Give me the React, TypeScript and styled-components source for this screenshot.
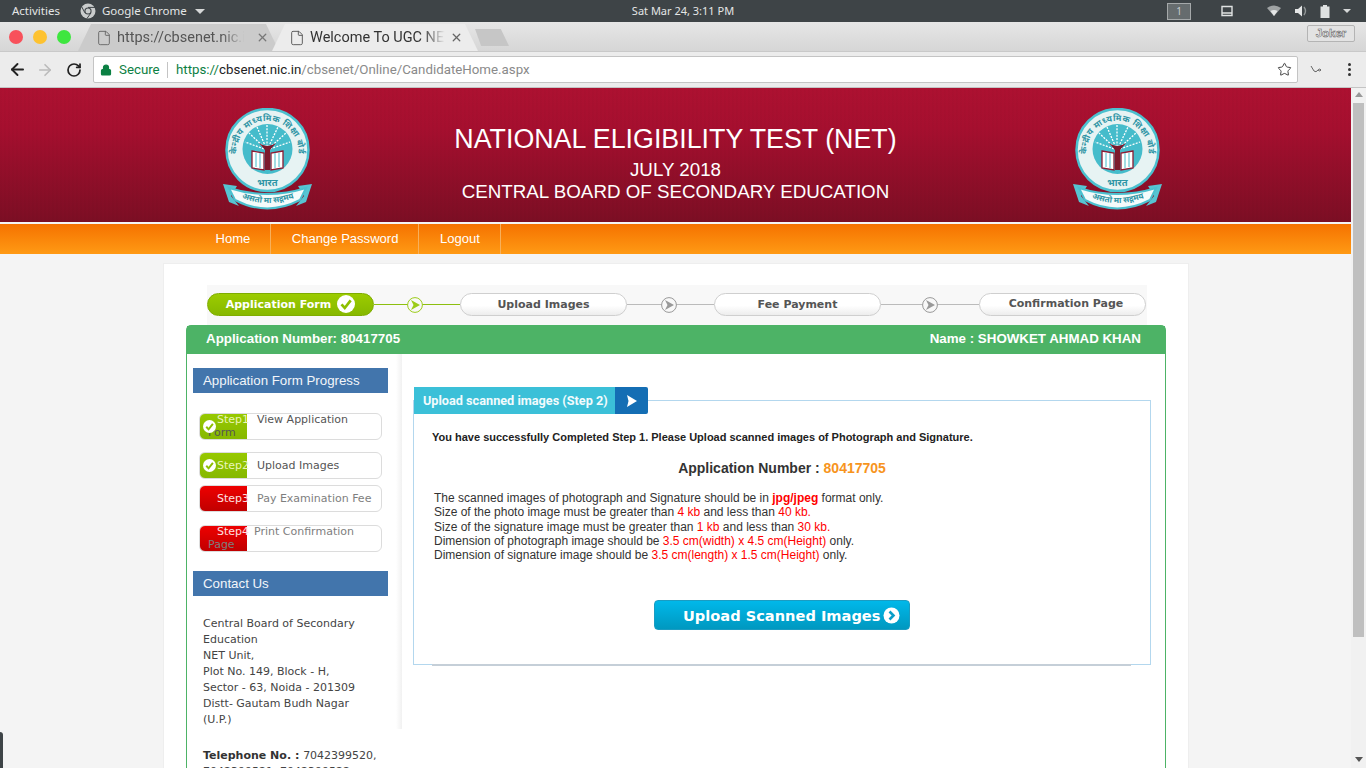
import React from 'react'
import styled, { createGlobalStyle } from 'styled-components'
import { ArrowLeft, ArrowRight, RotateCw, Star, Lock, File, X } from 'lucide-react'

const GlobalStyle = createGlobalStyle`
  html, body {
    margin: 0;
    padding: 0;
    overflow: hidden;
    background: #f4f4f4;
  }
  * { box-sizing: border-box; }
`

const Screen = styled.div`
  width: 1366px;
  height: 768px;
  overflow: hidden;
  display: flex;
  flex-direction: column;
  position: relative;
`

/* desktop top bar */
const TopBar = styled.div`
  height: 22px;
  flex: none;
  background: #3e4447;
  color: #e4e6e6;
  font: 11.5px/22px "Noto Sans", sans-serif;
  display: grid;
  grid-template-columns: 1fr auto 1fr;
  align-items: center;
`

const TopLeft = styled.div`
  display: flex;
  align-items: center;
  padding-left: 12px;
`

const TopClock = styled.div`
  font-size: 11px;
`

const TopRight = styled.div`
  display: flex;
  align-items: center;
  justify-content: flex-end;
`

const AppName = styled.span`
  display: flex;
  align-items: center;
  margin-left: 20px;
  gap: 6px;
`

const Caret = styled.span<{ $size: number }>`
  width: 0;
  height: 0;
  border-left: ${({ $size }) => $size}px solid transparent;
  border-right: ${({ $size }) => $size}px solid transparent;
  border-top: ${({ $size }) => $size}px solid #d5d8d8;
  margin-left: 2px;
`

const Workspace = styled.span`
  width: 24px;
  height: 17px;
  border: 1px solid #a5a9aa;
  background: #666c6e;
  color: #c8ccd0;
  text-align: center;
  font-size: 10px;
  line-height: 15px;
  margin-right: 30px;
`

const TrayIcon = styled.svg<{ $gap: number }>`
  display: block;
  margin-right: ${({ $gap }) => $gap}px;
`

/* browser tab strip */
const TabStrip = styled.div`
  height: 29px;
  flex: none;
  background: linear-gradient(#e6e6e6, #d6d6d6);
  display: flex;
  align-items: flex-end;
  padding-left: 78px;
  position: relative;
`

const Lights = styled.div`
  position: absolute;
  left: 9px;
  top: 8px;
  display: flex;
  gap: 10px;
`

const Light = styled.span<{ $color: string }>`
  width: 14px;
  height: 14px;
  border-radius: 50%;
  background: ${({ $color }) => $color};
`

const Tab = styled.div<{ $active?: boolean }>`
  width: ${({ $active }) => ($active ? 206 : 201)}px;
  height: 27px;
  margin-right: -7px;
  padding: ${({ $active }) => ($active ? '0 15px 0 17px' : '0 10px 0 18px')};
  background: ${({ $active }) => ($active ? '#ececec' : '#cbcbcb')};
  clip-path: polygon(0 100%, 13px 0, calc(100% - 13px) 0, 100% 100%);
  display: flex;
  align-items: center;
  gap: 5px;
  color: ${({ $active }) => ($active ? '#333' : '#555')};
  font: 14.5px "Roboto", sans-serif;
  z-index: ${({ $active }) => ($active ? 2 : 1)};
`

const TabTitle = styled.span<{ $fade: number }>`
  flex: 1;
  white-space: nowrap;
  overflow: hidden;
  -webkit-mask-image: linear-gradient(90deg, #000 ${({ $fade }) => $fade}%, transparent ${({ $fade }) => $fade + 17}%);
  mask-image: linear-gradient(90deg, #000 ${({ $fade }) => $fade}%, transparent ${({ $fade }) => $fade + 17}%);
`

const NewTab = styled.div`
  width: 34px;
  height: 17px;
  margin: 0 0 5px 4px;
  background: #c6c6c6;
  clip-path: polygon(0 0, 76% 0, 100% 100%, 18% 100%);
`

const JokerBadge = styled.div`
  position: absolute;
  right: 11px;
  top: 3px;
  width: 48px;
  height: 17px;
  border: 1px solid #b4b4b4;
  border-radius: 2px;
  background: #e3e3e3;
  color: #f2f2f2;
  font: bold 11.5px/15px "Liberation Sans", sans-serif;
  -webkit-text-stroke: 0.5px #555;
  text-align: center;
`

/* browser toolbar */
const Toolbar = styled.div`
  height: 37px;
  flex: none;
  background: #ececec;
  border-top: 1px solid #c9c9c9;
  border-bottom: 1px solid #c4c4c4;
  display: flex;
  align-items: center;
  padding-left: 8px;
`

const NavButton = styled.span<{ $width: number; $pad?: number }>`
  width: ${({ $width }) => $width}px;
  padding-left: ${({ $pad }) => $pad ?? 0}px;
  display: flex;
  align-items: center;
`

const Omnibox = styled.div`
  margin-left: 4px;
  width: 1205px;
  height: 27px;
  background: #fff;
  border: 1px solid #c4c4c4;
  border-radius: 2px;
  display: flex;
  align-items: center;
  padding: 0 5px 0 6px;
  font: 13.3px "Roboto", sans-serif;
`

const SecureLabel = styled.span`
  color: #0b8043;
  margin-left: 7px;
  width: 49px;
  border-right: 1px solid #c4c4c4;
  line-height: 16px;
`

const UrlText = styled.span`
  margin-left: 8px;
  flex: 1;
  color: #8a8a8a;
`

const UrlScheme = styled.span`
  color: #0b8043;
`

const UrlHost = styled.span`
  color: #222;
`

const ToolIcons = styled.div`
  display: flex;
  align-items: center;
  margin-left: 12px;
  gap: 26px;
`

const MenuDots = styled.span`
  display: flex;
  flex-direction: column;
  gap: 2px;
`

const Dot = styled.i`
  width: 3px;
  height: 3px;
  border-radius: 50%;
  background: #333;
`

/* page viewport */
const Viewport = styled.div`
  flex: 1;
  min-height: 0;
  display: flex;
`

const Page = styled.div`
  width: 1351px;
  overflow: hidden;
  background: #f4f4f4;
`

const Scrollbar = styled.div`
  width: 15px;
  background: #f1f1f1;
  padding: 4px 2px 6px;
  display: flex;
  flex-direction: column;
  align-items: center;
`

const ScrollArrow = styled.span`
  width: 0;
  height: 0;
  border-left: 4px solid transparent;
  border-right: 4px solid transparent;
  border-bottom: 5px solid #999;
`

const ScrollArrowDown = styled.span`
  width: 0;
  height: 0;
  margin-top: auto;
  border-left: 4px solid transparent;
  border-right: 4px solid transparent;
  border-top: 5px solid #555;
`

const ScrollThumb = styled.div`
  width: 11px;
  height: 534px;
  margin-top: 6px;
  background: #bfbfbf;
`

const Banner = styled.header`
  height: 134px;
  background:
    repeating-linear-gradient(90deg, rgba(0,0,0,0.015) 0 2px, transparent 2px 4px),
    linear-gradient(#ad1131, #a60f2f 30%, #7c0e24);
  display: grid;
  grid-template-columns: 90px 725px 90px;
  align-items: start;
  padding: 20px 0 0 223px;
`

const BannerText = styled.div`
  color: #fff;
  font-family: "Liberation Sans", sans-serif;
  text-align: center;
  padding-top: 15px;
`

const BannerTitle = styled.div`
  font-size: 26.8px;
  line-height: 32px;
`

const BannerLine = styled.div<{ $top?: number }>`
  font-size: 18.75px;
  line-height: 22px;
  margin-top: ${({ $top }) => $top ?? 0}px;
`

const LogoHolder = styled.div<{ $shift?: number }>`
  margin-left: ${({ $shift }) => $shift ?? 0}px;
`

const NavBar = styled.nav`
  margin-top: 2px;
  height: 30px;
  background: linear-gradient(#f57200, #ff9a14);
  display: flex;
  padding-left: 195px;
`

const NavItem = styled.a`
  padding: 0 20px 0 20.5px;
  border-right: 1px solid #f7b05c;
  color: #fff;
  font: 13.05px/30px "Liberation Sans", sans-serif;
`

const Card = styled.main`
  width: 1026px;
  margin: 9px 0 0 163px;
  padding: 21px 22px 0;
  background: #fff;
  border: 1px solid #eee;
  border-bottom: 0;
`

const StepBand = styled.div`
  width: 940px;
  height: 40px;
  margin-left: 21px;
  padding-top: 8px;
  background: #f8f8f8;
  display: flex;
  align-items: flex-start;
`

const StepPill = styled.div<{ $done?: boolean; $last?: boolean }>`
  width: 167px;
  height: 23px;
  border-radius: 12px;
  flex: none;
  padding-left: ${({ $last }) => ($last ? 7 : 0)}px;
  border: 1px solid ${({ $done }) => ($done ? '#7fad00' : '#cfcfcf')};
  background: ${({ $done }) => ($done ? 'linear-gradient(#9ccc00, #86b800)' : 'linear-gradient(#fff 55%, #ededed)')};
  color: ${({ $done }) => ($done ? '#fff' : '#555')};
  font: bold 11px/${({ $last }) => ($last ? 19 : 21)}px "DejaVu Sans", sans-serif;
  display: flex;
  justify-content: center;
  gap: 6px;
`

const PillCheck = styled.svg`
  margin-top: 1px;
`

const Connector = styled.div<{ $width: number; $done?: boolean; $nudge?: number }>`
  width: ${({ $width }) => $width}px;
  height: 23px;
  flex: none;
  padding-right: ${({ $nudge }) => $nudge ?? 0}px;
  display: flex;
  align-items: center;
  justify-content: center;
  background: linear-gradient(${({ $done }) => ($done ? '#8dbf10' : '#bbb')}, ${({ $done }) => ($done ? '#8dbf10' : '#bbb')}) center / 100% 1px no-repeat;
`

const Panel = styled.section`
  width: 980px;
  border: 1px solid #4db366;
  border-bottom: 0;
  border-radius: 5px 5px 0 0;
`

const PanelHead = styled.div`
  height: 28px;
  background: #4db366;
  color: #fff;
  font: bold 13.33px/26px "Liberation Sans", sans-serif;
  display: flex;
  justify-content: space-between;
  padding: 0 24px 0 19px;
`

const PanelBody = styled.div`
  display: flex;
  align-items: flex-start;
  background: #fff;
`

const Aside = styled.aside`
  width: 215px;
  flex: none;
  font: 11px/16px "DejaVu Sans", sans-serif;
  color: #444;
`

const SideShade = styled.div`
  height: 375px;
  padding: 14px 0 0 6px;
  background: linear-gradient(90deg, #fff 209px, #f1f1f1 215px);
`

const SideTitle = styled.div<{ $top?: number }>`
  width: 195px;
  height: 25px;
  margin-top: ${({ $top }) => $top ?? 0}px;
  background: #4275ac;
  color: #f2f6fa;
  padding-left: 10px;
  font: 13.3px/25px "Liberation Sans", sans-serif;
`

const ProgressRow = styled.div<{ $done?: boolean; $top: number }>`
  width: 183px;
  height: 27px;
  margin: ${({ $top }) => $top}px 0 0 6px;
  padding: 0 4px 0 8px;
  display: flex;
  align-items: center;
  position: relative;
  border: 1px solid #dcdcdc;
  border-radius: 6px;
  line-height: 13px;
  color: ${({ $done }) => ($done ? '#555' : '#7e7e7e')};
  background: ${({ $done }) =>
    $done
      ? 'linear-gradient(#97c900, #86b800) 0 0 / 47px 100% no-repeat, #fff'
      : 'linear-gradient(#ee0000, #c00000) 0 0 / 47px 100% no-repeat, #fff'};
`

const RowText = styled.div<{ $wrapped?: boolean }>`
  text-indent: 9px;
  font-size: 11px;
  margin-top: ${({ $wrapped }) => ($wrapped ? -2 : 0)}px;
`

const StepTag = styled.span<{ $done?: boolean; $width: number }>`
  display: inline-block;
  text-indent: 0;
  width: ${({ $width }) => $width}px;
  overflow: visible;
  color: ${({ $done }) => ($done ? '#e9f5b8' : '#fde0e0')};
`

const RowCheck = styled.svg`
  position: absolute;
  left: 3px;
  top: 6px;
`

const Address = styled.div`
  padding: 20px 0 0 10px;
  line-height: 16px;
`

const Phone = styled.div`
  padding: 19px 0 0 16px;
  height: 60px;
`

const Strong = styled.b`
  color: #333;
`

const Main = styled.div`
  flex: 1;
  padding: 46px 0 0 11px;
`

const UploadBox = styled.div`
  width: 738px;
  height: 265px;
  border: 1px solid #b3d7ee;
  padding: 0 18px;
  display: flex;
  flex-direction: column;
`

const BoxHeading = styled.div`
  margin: -14px 0 0 -18px;
  height: 27px;
  display: flex;
  font: bold 12.7px/27px "Roboto", sans-serif;
  color: #f2fbfd;
`

const HeadingLabel = styled.span`
  width: 201px;
  padding-left: 9px;
  background: #3bc0d8;
  white-space: nowrap;
`

const HeadingArrow = styled.span`
  width: 33px;
  background: #146eb4;
  border-radius: 0 2px 2px 0;
  display: flex;
  align-items: center;
  justify-content: center;
`

const SuccessLine = styled.p`
  margin: 16px 0 0;
  font: bold 11px/14px "Liberation Sans", sans-serif;
  color: #222;
`

const AppNumber = styled.h3`
  margin: 16px 0 0;
  text-align: center;
  font: bold 14px/16px "Liberation Sans", sans-serif;
  color: #333;
`

const Orange = styled.span`
  color: #f7941d;
`

const Rules = styled.div`
  margin: 15px 0 0 2px;
  font: 12px/14.25px "Liberation Sans", sans-serif;
  color: #333;
`

const Red = styled.span<{ $bold?: boolean }>`
  color: #f00;
  font-weight: ${({ $bold }) => ($bold ? 'bold' : 'normal')};
`

const UploadButton = styled.button`
  width: 256px;
  height: 30px;
  align-self: center;
  margin: 38px 0 0 0;
  padding: 0 0 0 28px;
  display: flex;
  align-items: center;
  gap: 3px;
  border: 1px solid #1a9cc2;
  border-radius: 4px;
  background: linear-gradient(#00b8ea, #0098c0);
  color: #fff;
  font: bold 14.6px "DejaVu Sans", sans-serif;
  white-space: nowrap;
`

const BoxRule = styled.hr`
  width: 699px;
  margin: auto 0 -2px;
  border: 0;
  border-top: 2px solid #c5cfd8;
`

const DockHandle = styled.div`
  position: absolute;
  left: 0;
  bottom: 0;
  width: 3px;
  height: 36px;
  background: #3e4447;
  border-radius: 0 3px 0 0;
`

const CrestText = styled.text<{ $size: number }>`
  font: bold ${({ $size }) => $size}px "Noto Sans", "Noto Sans Devanagari", sans-serif;
  fill: #2f95a5;
`

const CrestLogo = () => (
  <svg width="90" height="103" viewBox="0 0 90 103">
    <defs>
      <path id="crestTop" d="M18 60 A31 31 0 1 1 71 60" />
      <path id="crestLow" d="M12 87 Q44 103 78 87" />
    </defs>
    <path d="M0 76 L14 78 L8 88 L16 98 L6 94 Z M89 76 L75 78 L81 88 L73 98 L83 94 Z" fill="#57c4d2" />
    <circle cx="44.5" cy="42" r="41" fill="#e7f3f3" stroke="#4cc0cf" strokeWidth="2.5" />
    <CrestText $size={8.6} letterSpacing="0.5">
      <textPath href="#crestTop" startOffset="50%" textAnchor="middle">केन्द्रीय माध्यमिक शिक्षा बोर्ड</textPath>
    </CrestText>
    <circle cx="44.5" cy="41" r="25" fill="#45bccb" />
    <path d="M44 42 L22 34 M44 42 L26 25 M44 42 L34 19 M44 42 L44 17 M44 42 L55 19 M44 42 L63 25 M44 42 L67 34" stroke="#fff" strokeWidth="1.3" strokeDasharray="2 1.3" />
    <path d="M29 43 L41 45 V62 L29 60 Z M60 43 L48 45 V62 L60 60 Z" fill="#fff" stroke="#8c1b33" strokeWidth="1.3" />
    <path d="M33 45 V59 M37 45 V60 M52 45 V60 M56 45 V59" stroke="#45bccb" strokeWidth="1" />
    <path d="M36 35 Q44 41 53 35 L47 42 L47 62 H42 L42 42 Z" fill="#7d1a2e" />
    <CrestText $size={9.5} x="44.5" y="78" textAnchor="middle">भारत</CrestText>
    <path d="M6 80 Q44 92 83 80 L77 92 Q44 109 12 92 Z" fill="#f4fbfb" stroke="#4cc0cf" strokeWidth="2" />
    <CrestText $size={8.2}>
      <textPath href="#crestLow" startOffset="50%" textAnchor="middle">असतो मा सद्गमय</textPath>
    </CrestText>
  </svg>
)

const ArrowCircle = ({ color }: { color: string }) => (
  <svg width="16" height="16" viewBox="0 0 16 16">
    <circle cx="8" cy="8" r="7.4" fill="#f8f8f8" stroke={color} strokeWidth="1" />
    <path d="M4 3 L13 8 L4 13 L6.5 8 Z" fill={color} />
  </svg>
)

const CheckDisc = ({ size }: { size: number }) => (
  <>
    <circle cx={size / 2} cy={size / 2} r={size / 2} fill="#fff" />
    <path
      d={`M${size * 0.25} ${size * 0.52} L${size * 0.43} ${size * 0.72} L${size * 0.76} ${size * 0.3}`}
      fill="none"
      stroke="#8dbf00"
      strokeWidth={size * 0.15}
    />
  </>
)

const ChromeMark = () => (
  <svg width="16" height="16" viewBox="0 0 16 16">
    <circle cx="8" cy="8" r="7.5" fill="#c9cccc" />
    <circle cx="8" cy="8" r="3.6" fill="#3e4447" />
    <circle cx="8" cy="8" r="2.5" fill="#c9cccc" />
    <path d="M8 4.4 H15 M4.9 9.8 L1.6 3.6 M11 9.9 L7 15.4" stroke="#3e4447" strokeWidth="1" />
  </svg>
)

const steps = [
  { label: 'Step1', text: 'View Application Form', done: true, top: 20, tagWidth: 40, wrapped: true },
  { label: 'Step2', text: 'Upload Images', done: true, top: 12, tagWidth: 40, wrapped: false },
  { label: 'Step3', text: 'Pay Examination Fee', done: false, top: 6, tagWidth: 40, wrapped: false },
  { label: 'Step4', text: 'Print Confirmation Page', done: false, top: 13, tagWidth: 37, wrapped: true },
]

export default function App() {
  return (
    <Screen>
      <GlobalStyle />
      <TopBar>
        <TopLeft>
          Activities
          <AppName>
            <ChromeMark />
            Google Chrome
            <Caret $size={5} />
          </AppName>
        </TopLeft>
        <TopClock>Sat Mar 24,  3:11 PM</TopClock>
        <TopRight>
          <Workspace>1</Workspace>
          <TrayIcon $gap={34} width="12" height="12" viewBox="0 0 12 12">
            <path d="M1 1.5 H11 V10.5 H1 Z M1 8 H11" fill="none" stroke="#dfe2e2" strokeWidth="1.4" />
          </TrayIcon>
          <TrayIcon $gap={13} width="14" height="12" viewBox="0 0 14 12">
            <path d="M0 3 Q7 -2 14 3 L7 11 Z" fill="#9fa3a4" />
            <path d="M3.5 6 Q7 4 10.5 6 L7 11 Z" fill="#e4e6e6" />
          </TrayIcon>
          <TrayIcon $gap={12} width="14" height="12" viewBox="0 0 14 12">
            <path d="M1 4 H4 L8 0.5 V11.5 L4 8 H1 Z" fill="#e4e6e6" />
            <path d="M10 2 Q13 6 10 10" fill="none" stroke="#8f9495" strokeWidth="1.4" />
          </TrayIcon>
          <TrayIcon $gap={11} width="10" height="13" viewBox="0 0 10 13">
            <path d="M3 0 H7 V1.5 H9.5 V13 H0.5 V1.5 H3 Z" fill="#dfe2e2" />
          </TrayIcon>
          <Caret $size={4} />
          <TrayIcon $gap={14} width="1" height="1" />
        </TopRight>
      </TopBar>

      <TabStrip>
        <Lights>
          <Light $color="#f8515b" />
          <Light $color="#fdc230" />
          <Light $color="#3ee63f" />
        </Lights>
        <Tab>
          <File size={16} color="#666" strokeWidth={1.4} />
          <TabTitle $fade={78}>https://cbsenet.nic.in</TabTitle>
          <X size={13} color="#777" strokeWidth={2.4} />
        </Tab>
        <Tab $active>
          <File size={16} color="#555" strokeWidth={1.4} />
          <TabTitle $fade={83}>Welcome To UGC NET</TabTitle>
          <X size={13} color="#666" strokeWidth={2.4} />
        </Tab>
        <NewTab />
        <JokerBadge>Joker</JokerBadge>
      </TabStrip>

      <Toolbar>
        <NavButton $width={28}>
          <ArrowLeft size={19} color="#222" strokeWidth={2.4} />
        </NavButton>
        <NavButton $width={29}>
          <ArrowRight size={18} color="#bbb" strokeWidth={2.2} />
        </NavButton>
        <NavButton $width={24} $pad={1}>
          <RotateCw size={16} color="#222" strokeWidth={2.6} />
        </NavButton>
        <Omnibox>
          <Lock size={12} color="#0b8043" fill="#0b8043" strokeWidth={2.4} />
          <SecureLabel>Secure</SecureLabel>
          <UrlText>
            <UrlScheme>https://</UrlScheme>
            <UrlHost>cbsenet.nic.in</UrlHost>
            /cbsenet/Online/CandidateHome.aspx
          </UrlText>
          <Star size={15} color="#444" strokeWidth={1.6} />
        </Omnibox>
        <ToolIcons>
          <svg width="12" height="9" viewBox="0 0 12 9">
            <path d="M1 1 L4 6 Q6 8 8 5 M8 5 Q10 3 11 5 Q10 7 8 5" fill="none" stroke="#666" strokeWidth="1" />
          </svg>
          <MenuDots>
            <Dot />
            <Dot />
            <Dot />
          </MenuDots>
        </ToolIcons>
      </Toolbar>

      <Viewport>
        <Page>
          <Banner>
            <LogoHolder>
              <CrestLogo />
            </LogoHolder>
            <BannerText>
              <BannerTitle>NATIONAL ELIGIBILITY TEST (NET)</BannerTitle>
              <BannerLine $top={4}>JULY 2018</BannerLine>
              <BannerLine>CENTRAL BOARD OF SECONDARY EDUCATION</BannerLine>
            </BannerText>
            <LogoHolder $shift={35}>
              <CrestLogo />
            </LogoHolder>
          </Banner>
          <NavBar>
            <NavItem>Home</NavItem>
            <NavItem>Change Password</NavItem>
            <NavItem>Logout</NavItem>
          </NavBar>

          <Card>
            <StepBand>
              <StepPill $done>
                Application Form
                <PillCheck width="18" height="18" viewBox="0 0 18 18">
                  <CheckDisc size={18} />
                </PillCheck>
              </StepPill>
              <Connector $width={86} $done $nudge={4}>
                <ArrowCircle color="#9ccc1a" />
              </Connector>
              <StepPill>Upload Images</StepPill>
              <Connector $width={87} $nudge={4}>
                <ArrowCircle color="#999" />
              </Connector>
              <StepPill>Fee Payment</StepPill>
              <Connector $width={98}>
                <ArrowCircle color="#999" />
              </Connector>
              <StepPill $last>Confirmation Page</StepPill>
            </StepBand>

            <Panel>
              <PanelHead>
                <span>Application Number: 80417705</span>
                <span>Name : SHOWKET AHMAD KHAN</span>
              </PanelHead>
              <PanelBody>
                <Aside>
                  <SideShade>
                    <SideTitle>Application Form Progress</SideTitle>
                    {steps.map(step => (
                      <ProgressRow key={step.label} $done={step.done} $top={step.top}>
                        {step.done && (
                          <RowCheck width="13" height="13" viewBox="0 0 13 13">
                            <CheckDisc size={13} />
                          </RowCheck>
                        )}
                        <RowText $wrapped={step.wrapped}>
                          <StepTag $done={step.done} $width={step.tagWidth}>{step.label}</StepTag>
                          {step.text}
                        </RowText>
                      </ProgressRow>
                    ))}
                    <SideTitle $top={19}>Contact Us</SideTitle>
                    <Address>
                      Central Board of Secondary
                      <br />
                      Education
                      <br />
                      NET Unit,
                      <br />
                      Plot No. 149, Block - H,
                      <br />
                      Sector - 63, Noida - 201309
                      <br />
                      Distt- Gautam Budh Nagar
                      <br />
                      (U.P.)
                    </Address>
                  </SideShade>
                  <Phone>
                    <Strong>Telephone No. : </Strong>7042399520,
                    <br />
                    7042399521, 7042399522
                  </Phone>
                </Aside>
                <Main>
                  <UploadBox>
                    <BoxHeading>
                      <HeadingLabel>Upload scanned images (Step 2)</HeadingLabel>
                      <HeadingArrow>
                        <svg width="10" height="12" viewBox="0 0 10 12">
                          <path d="M0 0 L10 6 L0 12 L1.5 6 Z" fill="#fff" />
                        </svg>
                      </HeadingArrow>
                    </BoxHeading>
                    <SuccessLine>
                      You have successfully Completed Step 1. Please Upload scanned images of Photograph and Signature.
                    </SuccessLine>
                    <AppNumber>
                      Application Number : <Orange>80417705</Orange>
                    </AppNumber>
                    <Rules>
                      The scanned images of photograph and Signature should be in <Red $bold>jpg/jpeg</Red> format only.
                      <br />
                      Size of the photo image must be greater than <Red>4 kb</Red> and less than <Red>40 kb.</Red>
                      <br />
                      Size of the signature image must be greater than <Red>1 kb</Red> and less than <Red>30 kb.</Red>
                      <br />
                      Dimension of photograph image should be <Red>3.5 cm(width) x 4.5 cm(Height)</Red> only.
                      <br />
                      Dimension of signature image should be <Red>3.5 cm(length) x 1.5 cm(Height)</Red> only.
                    </Rules>
                    <UploadButton>
                      Upload Scanned Images
                      <svg width="17" height="17" viewBox="0 0 17 17">
                        <circle cx="8.5" cy="8.5" r="8" fill="#fff" />
                        <path d="M6.5 4.5 L10.5 8.5 L6.5 12.5" fill="none" stroke="#0a9ec8" strokeWidth="2.6" />
                      </svg>
                    </UploadButton>
                    <BoxRule />
                  </UploadBox>
                </Main>
              </PanelBody>
            </Panel>
          </Card>
        </Page>
        <Scrollbar>
          <ScrollArrow />
          <ScrollThumb />
          <ScrollArrowDown />
        </Scrollbar>
      </Viewport>
      <DockHandle />
    </Screen>
  )
}
